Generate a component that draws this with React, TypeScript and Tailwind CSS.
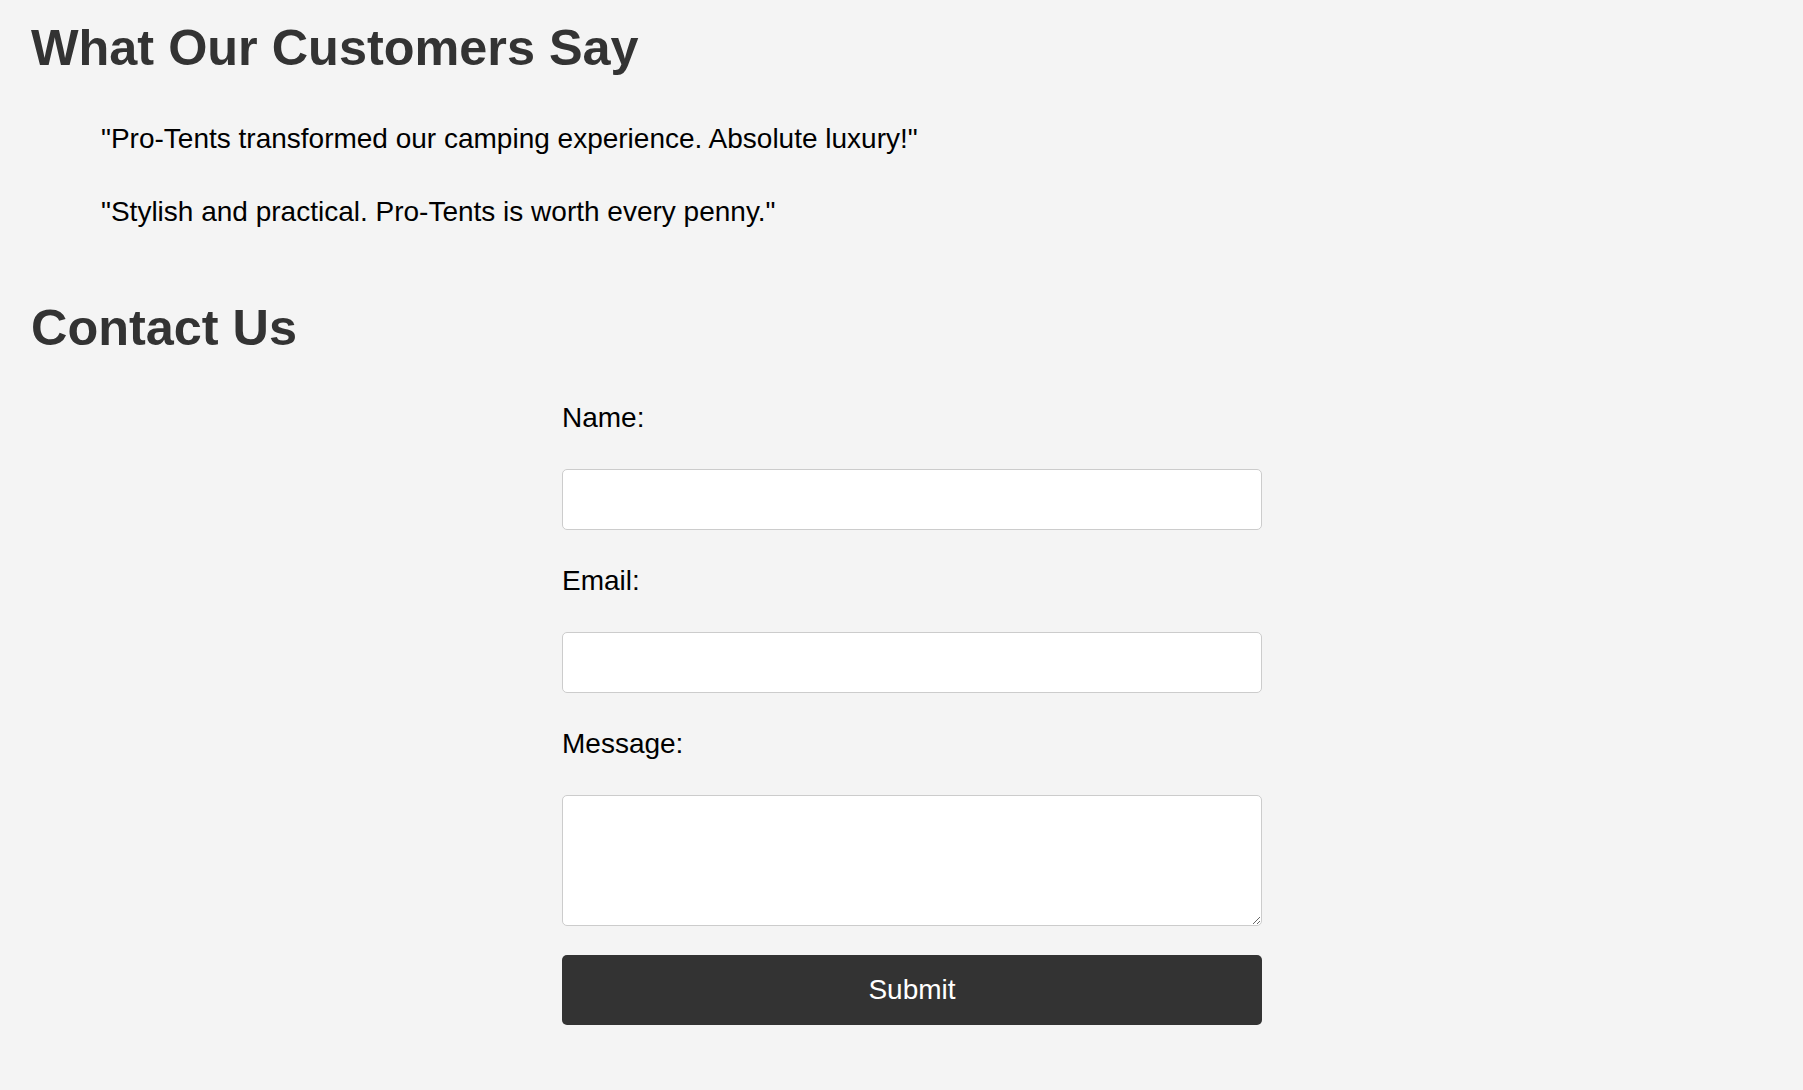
const quotes = [
  '"Pro-Tents transformed our camping experience. Absolute luxury!"',
  '"Stylish and practical. Pro-Tents is worth every penny."',
];

function Field({ label, id, type = 'text' }: { label: string; id: string; type?: string }) {
  return (
    <>
      <label htmlFor={id} className="mb-[35px] block text-[28px] leading-[32px] text-black">
        {label}
      </label>
      <input
        id={id}
        type={type}
        className="mb-[35px] block h-[61px] w-full rounded-[5px] border border-[#ccc] bg-white px-3 text-[28px] outline-none"
      />
    </>
  );
}

export default function App() {
  return (
    <div className="min-h-screen bg-[#f4f4f4] pt-[20px] pr-[10px] pb-[64px] pl-[31px] font-['Liberation_Sans',Arial,sans-serif] text-black">
      <section>
        <h2 className="text-[50.4px] leading-[56px] font-bold text-[#333]">What Our Customers Say</h2>
        <div className="mt-[47px] flex flex-col gap-[41px] pl-[70px]">
          {quotes.map((q) => (
            <blockquote key={q} className="text-[28px] leading-[32px]">
              {q}
            </blockquote>
          ))}
        </div>
      </section>

      <section className="mt-[72px]">
        <h2 className="text-[50.4px] leading-[56px] font-bold text-[#333]">Contact Us</h2>
        <form className="mx-auto mt-[46px] w-[700px]" onSubmit={(e) => e.preventDefault()}>
          <Field label="Name:" id="name" />
          <Field label="Email:" id="email" type="email" />
          <label htmlFor="message" className="mb-[35px] block text-[28px] leading-[32px] text-black">
            Message:
          </label>
          <textarea
            id="message"
            className="block h-[131px] w-full rounded-[5px] border border-[#ccc] bg-white px-3 py-2 text-[28px] outline-none"
          />
          <button
            type="submit"
            className="mt-[29px] h-[70px] w-full rounded-[5px] bg-[#333] text-[28px] text-white"
          >
            Submit
          </button>
        </form>
      </section>
    </div>
  );
}
